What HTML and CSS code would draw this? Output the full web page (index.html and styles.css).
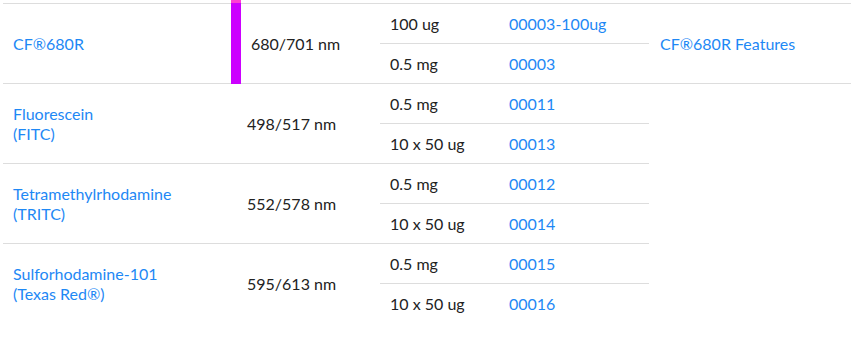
FILE: index.html
```html
<!DOCTYPE html>
<html>
<head>
<meta charset="utf-8">
<link rel="stylesheet" href="styles.css">
</head>
<body>
<table class="dyes">
  <colgroup>
    <col class="c-name"><col class="c-ex"><col class="c-size"><col class="c-cat"><col class="c-feat">
  </colgroup>
  <tbody>
    <tr class="first">
      <td rowspan="2" class="name"><a href="#">CF®680R</a></td>
      <td rowspan="2" class="ex swatch-cell"><span class="swatch"></span>680/701 nm</td>
      <td class="size">100 ug</td>
      <td class="cat"><a href="#">00003-100ug</a></td>
      <td rowspan="2" class="feat"><a href="#">CF®680R Features</a></td>
    </tr>
    <tr>
      <td class="size">0.5 mg</td>
      <td class="cat"><a href="#">00003</a></td>
    </tr>
    <tr class="group">
      <td rowspan="2" class="name"><a href="#">Fluorescein<br>(FITC)</a></td>
      <td rowspan="2" class="ex">498/517 nm</td>
      <td class="size">0.5 mg</td>
      <td class="cat"><a href="#">00011</a></td>
      <td rowspan="2" class="empty"></td>
    </tr>
    <tr>
      <td class="size">10 x 50 ug</td>
      <td class="cat"><a href="#">00013</a></td>
    </tr>
    <tr class="group">
      <td rowspan="2" class="name"><a href="#">Tetramethylrhodamine<br>(TRITC)</a></td>
      <td rowspan="2" class="ex">552/578 nm</td>
      <td class="size">0.5 mg</td>
      <td class="cat"><a href="#">00012</a></td>
      <td rowspan="2" class="empty"></td>
    </tr>
    <tr>
      <td class="size">10 x 50 ug</td>
      <td class="cat"><a href="#">00014</a></td>
    </tr>
    <tr class="group">
      <td rowspan="2" class="name"><a href="#">Sulforhodamine-101<br>(Texas Red®)</a></td>
      <td rowspan="2" class="ex">595/613 nm</td>
      <td class="size">0.5 mg</td>
      <td class="cat"><a href="#">00015</a></td>
      <td rowspan="2" class="empty"></td>
    </tr>
    <tr>
      <td class="size">10 x 50 ug</td>
      <td class="cat"><a href="#">00016</a></td>
    </tr>
  </tbody>
</table>
</body>
</html>
```

FILE: styles.css
```css
html, body {
  margin: 0;
  padding: 0;
  background: #fff;
}
body {
  font-family: Lato, "Open Sans", sans-serif;
  font-size: 16px;
  line-height: 20px;
  color: #222;
}
a {
  color: #1e88f5;
  text-decoration: none;
}
.dyes {
  border-collapse: collapse;
  margin: 3px 0 0 3px;
  width: 848px;
  table-layout: fixed;
}
.c-name { width: 234px; }
.c-ex { width: 143px; }
.c-size { width: 120px; }
.c-cat { width: 149px; }
.c-feat { width: 202px; }
.dyes td {
  height: 39px;
  padding: 0 10px;
  vertical-align: middle;
  border-top: 1px solid #ddd;
}
.dyes td.empty {
  border: none;
}
.dyes td.feat {
  padding-left: 11px;
  border-bottom: 1px solid #ddd;
}
.dyes td.swatch-cell {
  position: relative;
  padding-left: 14px;
}
.swatch {
  position: absolute;
  left: -6px;
  top: -4px;
  width: 10px;
  height: 84px;
  background: linear-gradient(#ff3fd2 0, #ff3fd2 3px, #cc00ff 3px);
}
.dyes td.cat {
  padding-left: 9px;
}
```
